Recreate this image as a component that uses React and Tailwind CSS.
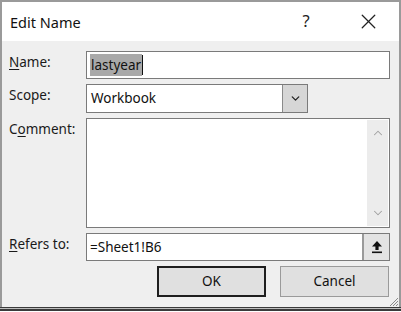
import { ChevronDown, ChevronUp, X } from "lucide-react"

function Label({ children, k }) {
  // k = index of the underlined access key letter, or null
  const text = children
  if (k == null) {
    return <div className="w-[77px] shrink-0 pt-px text-[13.5px] leading-5 text-[#1a1a1a]">{text}</div>
  }
  return (
    <div className="w-[77px] shrink-0 pt-px text-[13.5px] leading-5 text-[#1a1a1a]">
      {text.slice(0, k)}
      <span className="underline underline-offset-2">{text[k]}</span>
      {text.slice(k + 1)}
    </div>
  )
}

function UpArrowIcon() {
  return (
    <svg width="12" height="14" viewBox="0 0 12 14">
      <path d="M6 1 L11 6.5 L7.6 6.5 L7.6 10 L4.4 10 L4.4 6.5 L1 6.5 Z" fill="#111" />
      <rect x="1" y="11.5" width="10" height="1.6" fill="#111" />
    </svg>
  )
}

function SizeGrip() {
  return (
    <svg width="11" height="11" viewBox="0 0 11 11" className="absolute right-0 bottom-0">
      <path d="M10 2 L2 10 M10 5 L5 10 M10 8 L8 10" stroke="#8a8a8a" strokeWidth="1" />
    </svg>
  )
}

export default function App() {
  return (
    <div
      className="w-[401px] h-[312px] bg-white overflow-hidden"
      style={{ fontFamily: '"Noto Sans", "Open Sans", sans-serif' }}
    >
      <div className="flex flex-col h-[307px] border-t-2 border-x-2 border-[#9a9a9a]">
        {/* title bar */}
        <div className="flex items-center h-[39px] bg-white shrink-0">
          <div className="pl-[8px] pt-[2px] text-[14.5px] text-[#111] flex-1">Edit Name</div>
          <div className="w-[20px] text-center text-[16.5px] text-[#222] mr-[40px]">?</div>
          <X className="w-[25px] h-[25px] mr-[18px] text-[#222]" strokeWidth={1.2} />
        </div>

        {/* body */}
        <div className="relative flex-1 bg-[#efefef] pt-[10px] pl-[7px] pr-[9px] flex flex-col gap-[5px]">
          {/* Name */}
          <div className="flex items-start">
            <Label k={0}>Name:</Label>
            <div className="flex-1 h-[28px] border border-[#7a7a7a] bg-white flex items-center pl-[3px]">
              <span className="bg-[#a9a9a9] text-[13.5px] leading-[22px] px-[1px] text-[#111]">lastyear</span>
              <span className="w-px h-[20px] bg-[#111]" />
            </div>
          </div>

          {/* Scope */}
          <div className="flex items-start">
            <Label>Scope:</Label>
            <div className="w-[222px] h-[29px] border border-[#7a7a7a] bg-white flex">
              <div className="flex-1 flex items-center pl-[4px] text-[13.5px] text-[#111]">Workbook</div>
              <div className="w-[25px] bg-[#d6d6d6] border-l border-[#8a8a8a] flex items-center justify-center">
                <ChevronDown className="w-[13px] h-[13px] text-[#222]" strokeWidth={2.4} />
              </div>
            </div>
          </div>

          {/* Comment */}
          <div className="flex items-start">
            <Label k={1}>Comment:</Label>
            <div className="flex-1 h-[110px] border border-[#7a7a7a] bg-white flex justify-end p-px">
              <div className="w-[21px] bg-[#ececec] flex flex-col items-center justify-between py-[6px]">
                <ChevronUp className="w-[14px] h-[14px] text-[#a0a0a0]" strokeWidth={1.8} />
                <ChevronDown className="w-[14px] h-[14px] text-[#a0a0a0]" strokeWidth={1.8} />
              </div>
            </div>
          </div>

          {/* Refers to */}
          <div className="flex items-start">
            <Label k={0}>Refers to:</Label>
            <div className="flex-1 h-[28px] border border-[#7a7a7a] bg-white flex">
              <div className="flex-1 flex items-center pl-[3px] text-[13.5px] text-[#111]">=Sheet1!B6</div>
              <div className="w-[27px] bg-[#e3e3e3] border-l-2 border-[#9a9a9a] flex items-center justify-center">
                <UpArrowIcon />
              </div>
            </div>
          </div>

          {/* buttons */}
          <div className="flex justify-end gap-[14px] pr-px">
            <button className="w-[109px] h-[31px] bg-[#e0e0e0] border-2 border-[#1e1e1e] text-[13.5px] text-[#111]">
              OK
            </button>
            <button className="w-[109px] h-[31px] bg-[#e0e0e0] border border-[#9a9a9a] text-[13.5px] text-[#111]">
              Cancel
            </button>
          </div>

          <SizeGrip />
        </div>
      </div>
      <div className="h-px bg-[#3a3a3a]" />
      <div className="h-px bg-[#bdbdbd]" />
      <div className="h-[2px] bg-[#3a3a3a]" />
    </div>
  )
}
